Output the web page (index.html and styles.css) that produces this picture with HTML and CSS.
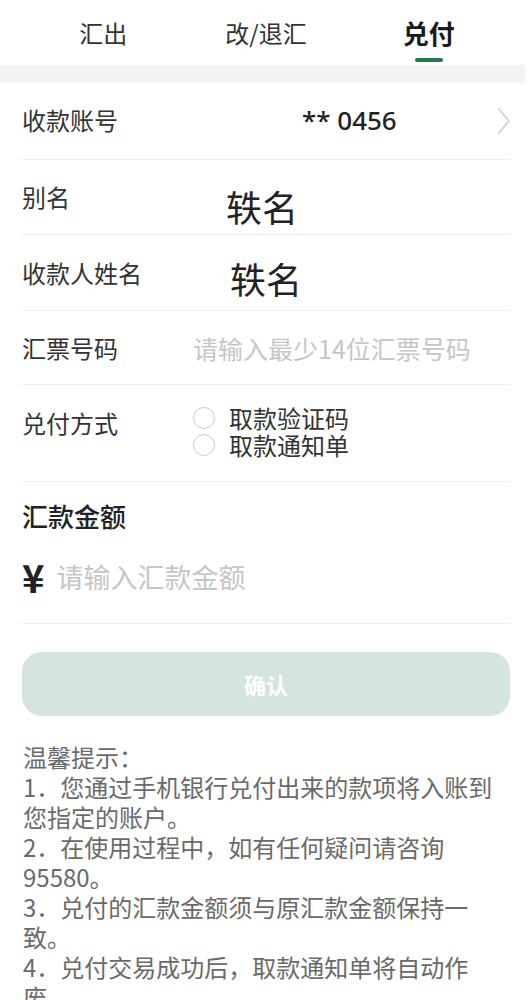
FILE: index.html
```html
<!DOCTYPE html>
<html lang="zh-CN">
<head>
    <meta charset="UTF-8">
    <meta name="viewport" content="width=device-width, initial-scale=1.0">
    <title>兑付</title>
    <link rel="stylesheet" href="styles.css">
</head>
<body>
    <div class="tabs">
        <div class="tab">汇出</div>
        <div class="tab">改/退汇</div>
        <div class="tab active">兑付</div>
    </div>
    <div class="gap"></div>

    <div class="form">
        <div class="row row-account">
            <span class="label">收款账号</span>
            <span class="account">** 0456</span>
            <svg class="arrow" width="14" height="28" viewBox="0 0 14 28">
                <polyline points="1.5,1.5 12,14 1.5,26.5" fill="none" stroke="#cfcfcf" stroke-width="1.6" stroke-linecap="round" stroke-linejoin="round"/>
            </svg>
        </div>

        <div class="row row-alias">
            <span class="label">别名</span>
            <span class="name">轶名</span>
        </div>

        <div class="row row-payee">
            <span class="label">收款人姓名</span>
            <span class="name">轶名</span>
        </div>

        <div class="row row-draft">
            <span class="label">汇票号码</span>
            <input class="field" type="text" placeholder="请输入最少14位汇票号码">
        </div>

        <div class="row row-method">
            <span class="label">兑付方式</span>
            <div class="options">
                <label class="option"><span class="radio"></span>取款验证码</label>
                <label class="option"><span class="radio"></span>取款通知单</label>
            </div>
        </div>

        <div class="amount">
            <div class="amount-title">汇款金额</div>
            <div class="amount-input">
                <span class="yuan">¥</span>
                <input class="amount-field" type="text" placeholder="请输入汇款金额">
            </div>
        </div>
    </div>

    <button class="confirm" type="button">确认</button>

    <div class="tips">
        <p>温馨提示：</p>
        <p>1．您通过手机银行兑付出来的款项将入账到您指定的账户。</p>
        <p>2．在使用过程中，如有任何疑问请咨询95580。</p>
        <p>3．兑付的汇款金额须与原汇款金额保持一致。</p>
        <p>4．兑付交易成功后，取款通知单将自动作废。</p>
    </div>
</body>
</html>
```

FILE: styles.css
```css
body {
    margin: 0;
    padding: 0;
    background-color: #fff;
    color: #333;
    font-family: 'Noto Sans CJK SC', 'Noto Sans', sans-serif;
}

.tabs {
    display: grid;
    grid-template-columns: repeat(3, 1fr);
    height: 65px;
    padding: 0 22px;
}

.tab {
    display: flex;
    flex-direction: column;
    align-items: center;
    padding-top: 18px;
    font-size: 24px;
    line-height: 30px;
    color: #333;
}

.tab.active {
    font-size: 26px;
    font-weight: bold;
    color: #1a1a1a;
}

.tab.active::after {
    content: '';
    width: 28px;
    height: 4px;
    margin-top: 10px;
    border-radius: 2px;
    background-color: #217a4b;
}

.gap {
    height: 18px;
    margin-right: 7px;
    background-color: #f3f3f6;
}

.form {
    padding: 0 22px;
}

.row {
    display: flex;
    align-items: center;
    border-bottom: 1px solid #eeeeee;
}

.label {
    flex: 0 0 171px;
    font-size: 24px;
    line-height: 30px;
    color: #333;
}

.row-account {
    height: 76px;
}

.row-account .label,
.account {
    margin-bottom: 2px;
}

.account {
    margin-left: 109px;
    font-family: 'Noto Sans', sans-serif;
    font-size: 26px;
    font-weight: 500;
    line-height: 30px;
    color: #222;
}

.arrow {
    margin-left: auto;
    margin-right: -1px;
}

.name {
    font-size: 36px;
    line-height: 44px;
    color: #222;
}

.row-alias {
    height: 74px;
}

.row-alias .name {
    margin-left: 33px;
    padding-top: 18px;
}

.row-payee {
    height: 75px;
}

.row-payee .name {
    margin-left: 37px;
    padding-top: 10px;
}

.row-draft {
    height: 73px;
}

.field {
    flex: 1;
    min-width: 0;
    padding: 0;
    border: none;
    outline: none;
    background: transparent;
    font-family: inherit;
    font-size: 25px;
    line-height: 30px;
    color: #333;
}

.field::placeholder,
.amount-field::placeholder {
    color: #c6c6c6;
}

.row-method {
    height: 96px;
    align-items: flex-start;
}

.row-method .label {
    padding-top: 23px;
}

.options {
    display: flex;
    flex-direction: column;
    padding-top: 19px;
}

.option {
    display: flex;
    align-items: center;
    gap: 14px;
    font-size: 24px;
    line-height: 27px;
    color: #333;
}

.radio {
    width: 22px;
    height: 22px;
    box-sizing: border-box;
    border: 1.5px solid #cccccc;
    border-radius: 50%;
}

.amount {
    padding: 19px 0 24px;
    border-bottom: 1px solid #eeeeee;
}

.amount-title {
    font-size: 26px;
    font-weight: 500;
    line-height: 30px;
    color: #222;
}

.amount-input {
    display: flex;
    align-items: center;
    gap: 12px;
    height: 44px;
    margin-top: 24px;
}

.yuan {
    font-size: 38px;
    font-weight: bold;
    line-height: 44px;
    color: #222;
}

.amount-field {
    flex: 1;
    min-width: 0;
    padding: 0;
    border: none;
    outline: none;
    background: transparent;
    font-family: inherit;
    font-size: 27px;
    line-height: 40px;
    color: #333;
}

.confirm {
    display: block;
    width: 488px;
    height: 64px;
    margin: 28px 22px 0;
    border: none;
    border-radius: 20px;
    background-color: #d3e5dd;
    color: #fff;
    font-family: inherit;
    font-size: 22px;
    font-weight: bold;
}

.tips {
    margin-top: 26px;
    padding: 0 24px 0 23px;
    font-size: 24px;
    line-height: 30px;
    color: #6a6a6a;
}

.tips p {
    margin: 0;
}
```
